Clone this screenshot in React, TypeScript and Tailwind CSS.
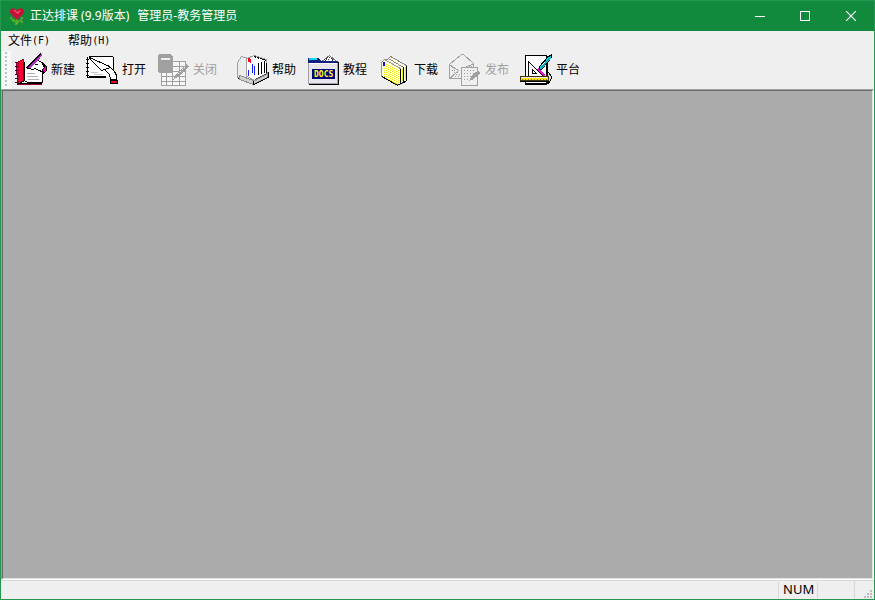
import type { ReactNode } from "react";

function Icon({ children }: { children: ReactNode }) {
  return (
    <svg aria-hidden="true" width="32" height="32" viewBox="0 0 32 32" fill="none" stroke="#000" strokeWidth="1" shapeRendering="crispEdges" className="shrink-0 overflow-visible">
      {children}
    </svg>
  );
}

function NotebookIcon() {
  return (
    <Icon>
      <path d="M7.500 26.500L27.500 28.500L28.500 14.500L12.500 10.500Z" fill="#fff" stroke="none" />
      <path d="M1.500 8.500L8.500 5.500V26.500L2.500 30.500Z" fill="#ff0030" stroke="#80002a" />
      <path d="M3.500 9V29" stroke="#a00030" strokeDasharray="2 1" />
      <path d="M0 8.500H3M0 12.500H3M0 16.500H3M0 20.500H3M0 24.500H3M0 28.500H3" stroke="#202020" />
      <path d="M2.500 30.500L9.500 26.500L12.500 28.500H27.500" />
      <path d="M3 30.500H26L28 28" stroke="#90002a" />
      <path d="M4 29.500H27M9.500 8V26" />
      <path d="M12 19.500H20M12 22.500H23M13 25.500H24" stroke="#b0b0b0" />
      <path d="M14.500 14.500L18.500 8.500L22.500 6.500L27.500 8.500L29.500 12.500L27.500 17.500L23.500 16.500L20.500 14.500L17.500 15.500Z" fill="#fff" />
      <path d="M20 10.500H23M27.500 16V28" />
      <path d="M27.500 9.500L31.500 12.500V16.500L28.500 19.500L27.500 15.500L29.500 13.500Z" fill="#f000b0" />
      <path d="M12.500 14.500L26.500 0" stroke="#000" strokeWidth="3" />
      <path d="M14 14L27 .5" stroke="#b030c0" strokeWidth="2" />
    </Icon>
  );
}

function OpenIcon() {
  return (
    <Icon>
      <path d="M2 3H27V23H2Z" fill="#fff" stroke="none" />
      <path d="M3 2.500H27M27.500 3V18M1.500 3V24M2 23.500H20M3 22.500H20" />
      <path d="M0 5.500H3M0 9.500H3M0 13.500H3M0 17.500H3M0 21.500H3" />
      <path d="M3.500 3.500L23.500 12.500M3.500 4.500L15.500 16.500L22.500 14.500" />
      <path d="M22.500 11.500L27.500 16.500" />
      <path d="M5 18.500H12M8 20.500H17" stroke="#c8c8c8" />
      <path d="M18.500 15.500L24.500 13.500L28.500 17.500L30.500 21.500V25.500H24.500L23.500 20.500L20.500 17.500Z" fill="#fff" />
      <path d="M24.500 26.500H31.500V29.500H24.500Z" fill="#f00020" />
    </Icon>
  );
}

function CloseFileIcon() {
  return (
    <Icon>
      <g stroke="#a0a0a0">
        <path d="M4.500 7.500H28.500V31.500H4.500Z" fill="#f6f6f6" />
        <path d="M4 12.500H28M4 17.500H28M4 22.500H28M4 27.500H28M9.500 18V31M15.500 7V31M22.500 7V31" />
        <path d="M1.500 1.500L2.500 .5H13.500L15.500 2.500V18.500H2.500L1.500 17.500Z" fill="#a0a0a0" />
        <path d="M4 5H13" stroke="#efefef" strokeWidth="2" />
        <path d="M16 26L19 20L29 10L32 12L21 23Z" fill="#a0a0a0" stroke="none" />
        <path d="M21 20L28 13" stroke="#efefef" strokeDasharray="1 2" />
      </g>
    </Icon>
  );
}

function HelpIcon() {
  return (
    <Icon>
      <path d="M1.500 8.500L5.500 2.500L12.500 4.500V26.500L1.500 23.500Z" fill="#ececec" stroke="#a0a0a0" />
      <path d="M2 24.500L17.500 30.500L31.500 23.500" />
      <path d="M3.500 21.500L17.500 26.500L31.500 18.500V23.500L17.500 30.500L3.500 25.500Z" fill="#d0d0d0" stroke="#909090" />
      <path d="M10.500 4.500L18.500 1.500L30.500 5.500V20.500L19.500 26.500L10.500 22.500Z" fill="#fff" stroke="#a0a0a0" />
      <path d="M18 2.500L24 4.500L30.500 6.500" stroke="#111" strokeDasharray="2 1" />
      <path d="M12 4L15 5V9L12 8Z" fill="#ff0020" stroke="none" />
      <path d="M12.500 16V22M16.500 10V19M18.500 12V21" stroke="#1020ff" />
      <path d="M22.500 9V21M25.500 8V20M28.500 7V19M30.500 9V19" />
      <path d="M19 25.500L31 19.500" stroke="#505050" />
      <path d="M17.500 27V31M18 30.500L32 23.500V18" />
    </Icon>
  );
}

function DocsIcon() {
  return (
    <Icon>
      <path d="M13.500 8.500L22.500 1.500L29.500 7.500V10H14Z" fill="#fff" stroke="#777" />
      <path d="M17 6L22 3L28 8M16 8L21 5L25 9" stroke="#333" strokeDasharray="1 1" />
      <path d="M1 4H12L14 7H31V10H1Z" fill="#102080" stroke="none" />
      <path d="M2 5H11" stroke="#10d8e8" strokeWidth="2" strokeDasharray="8 1" />
      <path d="M1.500 9.500H30.500V29.500H1.500Z" fill="#e5e5eb" stroke="#a0a0b0" />
      <path d="M2 9.500H30" stroke="#fff" />
      <path d="M31.500 8V30M2 30.500H32" />
      <path d="M5 15H28V25H5Z" fill="#000078" stroke="none" />
      <text x="7" y="23" fill="#ffff20" stroke="none" className="font-['DejaVu_Sans_Mono',monospace] text-[8px] font-bold">DOCS</text>
    </Icon>
  );
}

function DownloadIcon() {
  return (
    <Icon>
      <path d="M9.500 5.500L12.500 2.500L28.500 11.500V26.500L25.500 28.500L9.500 20.500Z" fill="#fffde0" stroke="#888" />
      <path d="M6.500 7.500L10.500 4.500L25.500 13.500V28.500L21.500 30.500L6.500 22.500Z" fill="#fffde0" stroke="#888" />
      <path d="M3.500 8.500L6.500 5.500L22.500 14.500V30.500H19.500L3.500 22.500Z" fill="#fffde0" stroke="#999" />
      <path d="M6.500 14V23M8.500 10V24M10.500 11V26M12.500 12V27M14.500 13V28M16.500 14V29M18.500 15V30M20.500 16V30" stroke="#f4ee00" strokeDasharray="1 1" />
      <path d="M4 22.500L19.500 31.500L22.500 29.500V15M23 29.500L25.500 28.500V13M26 28.500L28.500 26.500V12" />
      <path d="M24.500 15V27M27.500 13V25" stroke="#eee800" />
      <path d="M5 8H7V12H5Z" fill="#1010d0" stroke="none" />
    </Icon>
  );
}

function PublishIcon() {
  return (
    <Icon>
      <g stroke="#a0a0a0">
        <path d="M.5 10.500L12.500 .5H14.500L24.500 9.500V13M.5 10V24.500H12M1 11L9.500 16.500L1.500 24M24 10L17 13" />
        <path d="M4 20.500H12M3 22.500H12M5 18.500H11" strokeDasharray="1 2" />
        <path d="M3 13.500H5M3 16.500H7M20 12.500H23" strokeDasharray="1 1" />
        <path d="M12.500 13.500H28.500V31.500H12.500Z" fill="#efefef" />
        <path d="M15 16.500H26M15 19.500H26M15 22.500H23M15 25.500H22" strokeDasharray="1 2" />
        <path d="M21 26L23 22L29 17L31 19L24 25Z" fill="#a0a0a0" />
      </g>
    </Icon>
  );
}

function PlatformIcon() {
  return (
    <Icon>
      <path d="M5.500 1.500H26.500V29.500H5.500Z" fill="#fff" />
      <path d="M27 2V29M5 29.500H27" strokeWidth="2" />
      <path d="M8.500 8.500V22.500H23.500L8.500 7.500Z" fill="#fff" />
      <path d="M12.500 15.500V19.500H16.500Z" fill="#fff" />
      <path d="M18 15L25 22" stroke="#f010c8" strokeWidth="2" />
      <path d="M19 13L28 3L31 1V4L22 15L19 16Z" fill="#20cbd8" stroke="#000" />
      <path d="M20 14L29 4" stroke="#fff" />
      <path d="M21 14L30 4" stroke="#00b8c8" strokeWidth="2" />
      <path d="M27.500 18.500H28.500L31.500 22.500V24.500L28.500 29.500H27.500Z" fill="#ddd" />
      <path d="M.5 22.500H28.500V26.500H.5Z" fill="#ffe21a" stroke="#403800" />
      <path d="M2 23.500H27" stroke="#fff" strokeDasharray="1 1" />
      <path d="M2 25.500H27" stroke="#8f7500" strokeDasharray="1 2" />
      <path d="M0 27.500H29" />
    </Icon>
  );
}

function ToolButton({ label, icon, disabled = false }: { label: string; icon: ReactNode; disabled?: boolean }) {
  return (
    <button type="button" disabled={disabled} className="flex h-9 w-[71px] shrink-0 items-center gap-1 pl-1 text-black disabled:text-[#a0a0a0]">
      {icon}
      <span className="whitespace-nowrap">{label}</span>
    </button>
  );
}

function MenuItem({ label, hotkey }: { label: string; hotkey: string }) {
  return (
    <button type="button" className="flex items-center whitespace-nowrap">
      {label}
      <span className="font-['DejaVu_Sans_Mono',monospace] text-[10px]">({hotkey})</span>
    </button>
  );
}

export default function App() {
  return (
    <div className="flex h-screen flex-col overflow-hidden border border-[#259750] bg-[#efefef] font-['Noto_Sans','Noto_Sans_CJK_SC',sans-serif] text-xs text-black">
      <header className="flex h-[30px] shrink-0 items-center bg-[#128a3e] pl-2 text-white">
        <svg aria-hidden="true" width="16" height="18" viewBox="0 0 16 18" className="mr-[5px] shrink-0">
          <path d="M8 10V17" stroke="#55b52c" strokeWidth="2" />
          <path d="M2 12L5 12L7 14L8 15L12 12L14 13L9 16L4 15Z" fill="#49b51c" />
          <path d="M1 3L4 1L8 3L12 1L15 3V6L8 13L1 6Z" fill="#c51238" />
          <path d="M4 3L6 3L8 5L12 3L9 7Z" fill="#f05a78" />
          <path d="M1 11H3M12 11H14M12 15H14M6 17H8" stroke="#c0b522" />
        </svg>
        <h1 className="flex flex-1 gap-2 whitespace-nowrap">
          <span>正达排课 (9.9版本)</span>
          <span>管理员-教务管理员</span>
        </h1>
        <button type="button" aria-label="最小化" className="flex h-full w-[45px] items-center justify-center">
          <svg width="10" height="10" shapeRendering="crispEdges"><path d="M0 5.500H10" stroke="#fff" /></svg>
        </button>
        <button type="button" aria-label="最大化" className="flex h-full w-[46px] items-center justify-center">
          <svg width="10" height="10" shapeRendering="crispEdges"><path d="M.5 .5H9.500V9.500H.5Z" fill="none" stroke="#fff" /></svg>
        </button>
        <button type="button" aria-label="关闭窗口" className="flex h-full w-[46px] items-center justify-center">
          <svg width="10" height="10"><path d="M0 0L10 10M10 0L0 10" stroke="#fff" strokeWidth="1.2" /></svg>
        </button>
      </header>
      <nav className="flex h-5 shrink-0 items-center gap-[18px] pl-[7px]">
        <MenuItem label="文件" hotkey="F" />
        <MenuItem label="帮助" hotkey="H" />
      </nav>
      <div role="toolbar" aria-label="工具栏" className="flex h-[38px] shrink-0 items-center pl-px">
        <div className="h-full w-[9px] shrink-0 bg-[#f9f9f9] pl-[3px]">
          <svg aria-hidden="true" width="2" height="36" shapeRendering="crispEdges">
            <path d="M1 1V36" stroke="#bdbdbd" strokeWidth="2" strokeDasharray="2 2" />
          </svg>
        </div>
        <ToolButton label="新建" icon={<NotebookIcon />} />
        <ToolButton label="打开" icon={<OpenIcon />} />
        <ToolButton label="关闭" icon={<CloseFileIcon />} disabled />
        <div className="w-2 shrink-0" />
        <ToolButton label="帮助" icon={<HelpIcon />} />
        <ToolButton label="教程" icon={<DocsIcon />} />
        <ToolButton label="下载" icon={<DownloadIcon />} />
        <ToolButton label="发布" icon={<PublishIcon />} disabled />
        <ToolButton label="平台" icon={<PlatformIcon />} />
      </div>
      <main className="flex min-h-0 flex-1 border border-t-[#a0a0a0] border-r-white border-b-white border-l-[#a0a0a0]">
        <div className="flex-1 border border-t-[#696969] border-r-[#e3e3e3] border-b-[#e3e3e3] border-l-[#696969] bg-[#ababab]" />
      </main>
      <footer className="flex h-[19px] shrink-0 items-center border-t border-[#d8d8d8] text-[13px]">
        <div className="flex-1" />
        <div className="flex h-[17px] w-[39px] items-center border-l border-[#d7d7d7] pl-1">NUM</div>
        <div className="h-[17px] w-[37px] border-l border-[#d7d7d7]" />
        <div className="flex h-full w-5 items-end justify-end border-l border-[#d7d7d7] pr-[2px] pb-px">
          <svg aria-hidden="true" width="8" height="8" fill="#bdbdbd" shapeRendering="crispEdges">
            <path d="M6 0h2v2h-2zM3 3h2v2h-2zM6 3h2v2h-2zM0 6h2v2h-2zM3 6h2v2h-2zM6 6h2v2h-2z" />
          </svg>
        </div>
      </footer>
    </div>
  );
}
